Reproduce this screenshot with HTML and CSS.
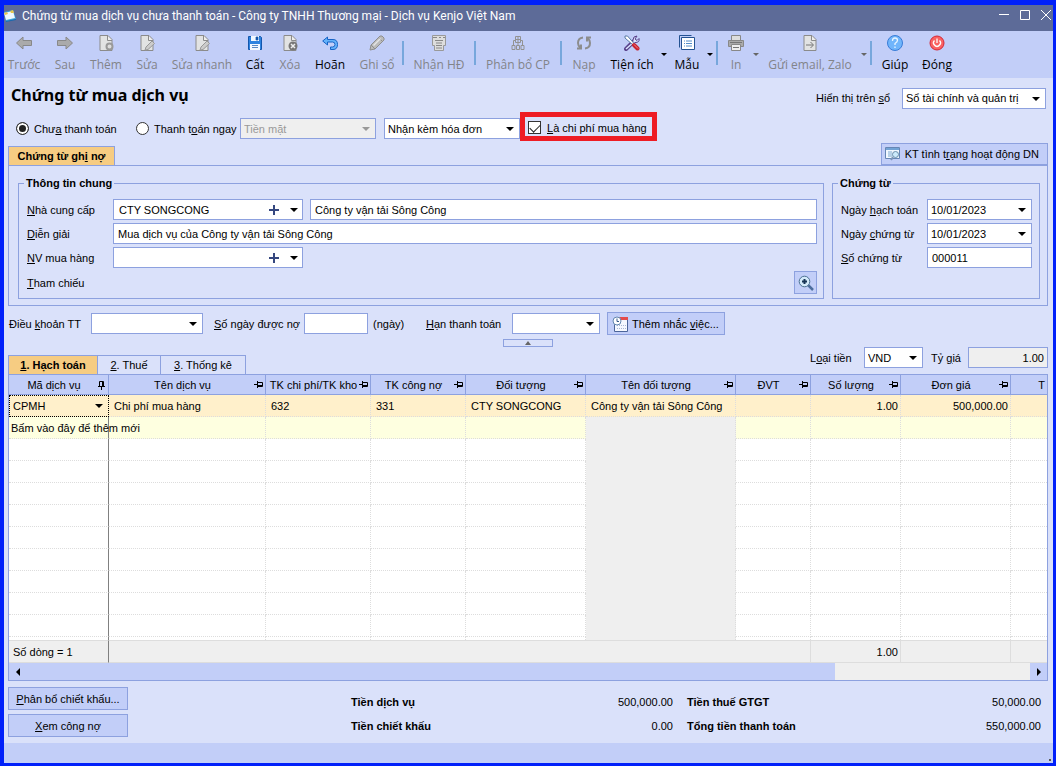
FILE: index.html
```
<!DOCTYPE html>
<html lang="vi">
<head>
<meta charset="utf-8">
<meta name="viewport" content="width=device-width, initial-scale=1">
<title>Chứng từ mua dịch vụ</title>
<link rel="stylesheet" href="styles.css">
</head>
<body>
<svg class="defs" aria-hidden="true">
  <symbol id="page" viewBox="0 0 16 16"><path d="M2 .5h8l4 4v11H2z" fill="#e2e3e3" stroke="#8b8b8b"/><path d="M9.500 1v4.500H14" fill="#eee" stroke="#8b8b8b"/></symbol>
  <symbol id="pin" viewBox="0 0 10 8"><path d="M0 3.500h3M3.500 0v7M3.500 1.500h5v4h-5M4 4.500h5" fill="none" stroke="#000"/></symbol>
  <symbol id="plus" viewBox="0 0 10 10"><path d="M5 0v10M0 5h10" stroke="#35477f" stroke-width="2"/></symbol>
</svg>
<div class="window">
  <header class="titlebar">
    <svg class="app-icon" viewBox="0 0 12 14"><path d="M0 3l9-2 3 9-10 3z" fill="#3ba3dc"/><path d="M0 4l9-2 2 7-9 2z" fill="#eef8ff"/><path d="M0 4l3-1 1 2-3 1zM6 2l3-1 1 3-3 0z" fill="#e8c64b"/><path d="M2 12l10-2v1L2 13z" fill="#1869af"/></svg>
    <span class="window-title">Chứng từ mua dịch vụ chưa thanh toán - Công ty TNHH Thương mại - Dịch vụ Kenjo Việt Nam</span>
    <div class="window-controls">
      <button aria-label="Thu nhỏ"><svg viewBox="0 0 12 12"><path d="M1 5.500h10" /></svg></button>
      <button aria-label="Phóng to"><svg viewBox="0 0 12 12"><path d="M1.500 1.500h9v9h-9z"/></svg></button>
      <button aria-label="Đóng cửa sổ"><svg viewBox="0 0 12 12"><path d="M1 1l10 10M11 1L1 11"/></svg></button>
    </div>
  </header>

  <nav class="toolbar">
    <button class="tool w40" disabled><svg viewBox="0 0 16 16"><path d="M.5 8L7 2v3.500h8.500v5H7V14z" fill="#aaa" stroke="#888"/></svg>Trước</button>
    <button class="tool w42" disabled><svg viewBox="0 0 16 16"><path d="M15.500 8L9 2v3.500H.5v5H9V14z" fill="#aaa" stroke="#888"/></svg>Sau</button>
    <button class="tool w40" disabled><svg viewBox="0 0 16 16"><use href="#page"/><circle cx="11.500" cy="11.500" r="3" fill="#ddd" stroke="#999" stroke-width="2"/></svg>Thêm</button>
    <button class="tool w42" disabled><svg viewBox="0 0 16 16"><use href="#page"/><path d="M6 15l1-3 6-6 2.500 2.500-6.500 6z" fill="#ccc" stroke="#999"/></svg>Sửa</button>
    <button class="tool w68" disabled><svg viewBox="0 0 16 16"><use href="#page"/><path d="M6 15l1-3 6-6 2.500 2.500-6.500 6z" fill="#ccc" stroke="#999"/></svg>Sửa nhanh</button>
    <button class="tool w38"><svg viewBox="0 0 16 16"><path d="M1.500 1.500h12l1 1v12h-13z" fill="#2d82df" stroke="#1457ad"/><path d="M4 1h8v5H4zM3 9h10v6H3z" fill="#f2f8ff"/><path d="M9 2h2v3H9zM5 10.500h6M5 12.500h6" fill="#1457ad" stroke="#1457ad" stroke-width=".7"/></svg>Cất</button>
    <button class="tool w32" disabled><svg viewBox="0 0 16 16"><use href="#page"/><circle cx="11" cy="11" r="4.500" fill="#777"/><path d="M9 9l4 4M13 9l-4 4" stroke="#eee" stroke-width="1.500"/></svg>Xóa</button>
    <button class="tool w48"><svg viewBox="0 0 16 16"><path d="M.7 6L5.500 2v2.500H11q4.500 0 4.500 5T11 14.500H8.500V12h2q2.500 0 2.500-2.500T10.500 7h-5v3z" fill="#65b3fb" stroke="#1763c5"/></svg>Hoãn</button>
    <button class="tool w46" disabled><svg viewBox="0 0 16 16"><path d="M1 15l1-5 9-9h2l2 2v2l-9 9zM2 10l4 4M10 3l4 4" fill="#bbb" stroke="#8e8e8e"/><path d="M4.500 10.500l7-7" stroke="#e5e5e5" stroke-width="1.500"/></svg>Ghi sổ</button>
    <span class="separator"></span>
    <button class="tool w66" disabled><svg viewBox="0 0 16 16"><path d="M1.500.5h13v10h-2v5h-9v-5h-2z" fill="#ddd" stroke="#999"/><path d="M2 2.500h4M8 2.500h2M12 2.500h2M4 5.500h8M5 8h6M5 10.500h6M5 13h6" stroke="#888"/></svg>Nhận HĐ</button>
    <span class="separator"></span>
    <button class="tool w80" disabled><svg viewBox="0 0 16 16"><path d="M5.500 1.500h5v6h-5zM6 4.500h4M8 2v5M8 7.500v3M3.500 11V5.500h2M10.500 5.500h2V11M2 10.500h3v4H2zM6.500 10.500h3v4h-3zM11 10.500h3v4h-3z" fill="none" stroke="#929292"/></svg>Phân bổ CP</button>
    <span class="separator"></span>
    <button class="tool w40" disabled><svg viewBox="0 0 16 16"><path d="M7 2.500Q2 3 2 8q0 3 2.500 5M1 13.500h4V9.500M9 13.500q5-.5 5-5.500 0-3-2.500-5M15 2.500h-4v4" fill="none" stroke="#8c8c8c" stroke-width="2"/></svg>Nạp</button>
    <button class="tool w56"><svg viewBox="0 0 16 16"><path d="M2 14l8-8" stroke="#59418b" stroke-width="4" stroke-linecap="round"/><path d="M9 5q0-4 4-4l-2 3 2 1.500 2-2q1 4-4 4" fill="#dce5ff" stroke="#59418b"/><path d="M2 14l9-8" stroke="#dce5ff" stroke-width="1.500"/><path d="M1 1h2.500l7 8-1.500 1-8-7z" fill="#fff" stroke="#597ba5"/><path d="M10 10l3.500 3.500" stroke="#c72331" stroke-width="4" stroke-linecap="round"/><path d="M10 9.500l4 4" stroke="#ff8585"/></svg>Tiện ích</button>
    <button class="drop w8" aria-label="Mở Tiện ích"><i class="arrow"></i></button>
    <button class="tool w38"><svg viewBox="0 0 16 16"><path d="M.5 12.500V.5h12" fill="none" stroke="#245292"/><path d="M2.500 2.500h13v12h-13z" fill="#fff" stroke="#245292"/><path d="M5 6h1M7 6h6M5 8.500h1M7 8.500h6M5 11h1M7 11h6" stroke="#528bca"/></svg>Mẫu</button>
    <button class="drop w8" aria-label="Mở Mẫu"><i class="arrow"></i></button>
    <span class="separator"></span>
    <button class="tool w32" disabled><svg viewBox="0 0 16 16"><path d="M3.500 5V.5h9V5" fill="#ddd" stroke="#888"/><path d="M.5 5.500h15v6H.5z" fill="#aaa" stroke="#888"/><path d="M3.500 9.500h9v6h-9z" fill="#eee" stroke="#888"/><path d="M2 7.500h12M5 12.500h6" stroke="#777"/></svg>In</button>
    <button class="drop w8" disabled aria-label="Mở In"><i class="arrow"></i></button>
    <button class="tool w100" disabled><svg viewBox="0 0 16 16"><use href="#page"/><path d="M4 10h7M8.500 7l3 3-3 3" fill="none" stroke="#777"/></svg>Gửi email, Zalo</button>
    <button class="drop w8" disabled aria-label="Mở Gửi email, Zalo"><i class="arrow"></i></button>
    <span class="separator"></span>
    <button class="tool w42"><svg viewBox="0 0 16 16"><circle cx="8" cy="8" r="7.500" fill="#70b5fb" stroke="#397cd7"/><path d="M5.500 6q0-3 2.500-3t2.500 2.300Q10.500 7 8 8.500v1.500M8 11.500V13" fill="none" stroke="#e8f5ff" stroke-width="1.300"/></svg>Giúp</button>
    <button class="tool w42"><svg viewBox="0 0 16 16"><circle cx="8" cy="8" r="7" fill="#fa6262" stroke="#d52939"/><path d="M5.500 5.500q-2 2-.5 4t3 2 3-2-.5-4M8 3.500V8" fill="none" stroke="#fff" stroke-width="1.300"/></svg>Đóng</button>
  </nav>

  <main class="content">
    <div class="heading-row">
      <h1>Chứng từ mua dịch vụ</h1>
      <label for="book">Hiển thị trên <u>s</u>ổ</label>
      <span class="select w144"><select id="book"><option>Sổ tài chính và quản trị</option></select></span>
    </div>

    <div class="payment-row">
      <label class="radio first"><input type="radio" name="pay" checked><span>Chư<u>a</u> thanh toán</span></label>
      <label class="radio second"><input type="radio" name="pay"><span>Thanh t<u>o</u>án ngay</span></label>
      <span class="select method off"><select disabled aria-label="Phương thức thanh toán"><option>Tiền mặt</option></select></span>
      <span class="select invoice"><select aria-label="Hóa đơn"><option>Nhận kèm hóa đơn</option></select></span>
      <label class="highlight"><input type="checkbox" checked><span><u>L</u>à chi phí mua hàng</span></label>
    </div>

    <div class="tab-row">
      <button class="tab active voucher">Chứng từ gh<u>i</u> nợ</button>
      <button class="button status-check"><svg width="16" height="14" viewBox="0 0 16 14"><path d="M.5.5h14v11H.5z" fill="#f2f8ff" stroke="#6686b5"/><path d="M1 2h13" stroke="#72a3d5" stroke-width="2"/><path d="M3 5h4M3 7h4M3 9h4" stroke="#7da9d0"/><circle cx="10.500" cy="7.500" r="3" fill="#cceafb" stroke="#6a8eaa"/><path d="M8 10l-2 3" stroke="#7b94b7" stroke-width="2"/></svg><span>KT tình t<u>r</u>ạng hoạt động DN</span></button>
    </div>
    <section class="panel">
      <fieldset class="general">
        <legend>Thông tin chung</legend>
        <div class="form-grid">
          <label for="vendor"><u>N</u>hà cung cấp</label>
          <div class="pair">
            <span class="combo"><input id="vendor" value="CTY SONGCONG"><button class="add" aria-label="Thêm nhà cung cấp"><svg width="10" height="10"><use href="#plus"/></svg></button><button class="open" aria-label="Chọn nhà cung cấp"><i class="arrow"></i></button></span>
            <input class="field grow" aria-label="Tên nhà cung cấp" value="Công ty vận tải Sông Công">
          </div>
          <label for="note"><u>D</u>iễn giải</label>
          <input id="note" class="field" value="Mua dịch vụ của Công ty vận tải Sông Công">
          <label for="buyer"><u>N</u>V mua hàng</label>
          <span class="combo"><input id="buyer"><button class="add" aria-label="Thêm nhân viên"><svg width="10" height="10"><use href="#plus"/></svg></button><button class="open" aria-label="Chọn nhân viên"><i class="arrow"></i></button></span>
          <span class="reference"><u>T</u>ham chiếu</span>
          <button class="button search" aria-label="Tìm tham chiếu"><svg width="16" height="16" viewBox="0 0 16 16"><path d="M10 10l5 5" stroke="#4c6d9d" stroke-width="2.500"/><circle cx="6.500" cy="6.500" r="5.300" fill="#d4eafa" stroke="#4b7191"/><path d="M6.500 4v5M4 6.500h5" stroke="#173454" stroke-width="2"/></svg></button>
        </div>
      </fieldset>
      <fieldset class="voucher-info">
        <legend>Chứng từ</legend>
        <div class="date-grid">
          <label for="d1">Ngày <u>h</u>ạch toán</label>
          <span class="select"><select id="d1"><option>10/01/2023</option></select></span>
          <label for="d2">Ngày <u>c</u>hứng từ</label>
          <span class="select"><select id="d2"><option>10/01/2023</option></select></span>
          <label for="no"><u>S</u>ố chứng từ</label>
          <input id="no" class="field" value="000011">
        </div>
      </fieldset>
    </section>

    <div class="terms">
      <label for="term" class="term-label">Điều <u>k</u>hoản TT</label>
      <span class="select w112"><select id="term"><option></option></select></span>
      <label for="days" class="days-label"><u>S</u>ố ngày được nợ</label>
      <input id="days" class="field w64"><span class="unit">(ngày)</span>
      <label for="due" class="due-label"><u>H</u>ạn thanh toán</label>
      <span class="select w88"><select id="due"><option></option></select></span>
      <button class="button reminder"><svg width="16" height="16" viewBox="0 0 16 16"><path d="M2.500 3.500h13v12h-13z" fill="#f5f8ff" stroke="#4c659a"/><path d="M7 2.500h9" stroke="#e34b4b" stroke-width="3"/><path d="M5 9.500h9M5 12.500h9" stroke="#aab7d5" stroke-dasharray="1 1"/><circle cx="5" cy="5" r="4" fill="#fff" stroke="#6488b1"/><path d="M5 2.500V5.500h2" fill="none" stroke="#34598a"/></svg><span>Thêm nhắc <u>v</u>iệc...</span></button>
    </div>
    <button class="collapse" aria-label="Thu gọn"><i></i></button>

    <div class="grid-tabs">
      <button class="tab active t90"><u>1</u>. Hạch toán</button>
      <button class="tab t64"><u>2</u>. Thuế</button>
      <button class="tab t86"><u>3</u>. Thống kê</button>
      <label for="currency" class="currency-label">L<u>o</u>ại tiền</label>
      <span class="select currency"><select id="currency"><option>VND</option></select></span>
      <label for="rate" class="rate-label">Tỷ <u>g</u>iá</label>
      <input id="rate" class="field rate" value="1.00" readonly>
    </div>

    <section class="grid">
      <div class="grid-body">
      <table>
        <colgroup><col class="c100"><col class="c157"><col class="c105"><col class="c95"><col class="c120"><col class="c150"><col class="c75"><col class="c90"><col class="c110"><col></colgroup>
        <thead><tr>
          <th><div><span>Mã dịch vụ</span><svg class="pin down"><use href="#pin"/></svg></div></th>
          <th><div><span>Tên dịch vụ</span><svg class="pin"><use href="#pin"/></svg></div></th>
          <th><div><span>TK chi phí/TK kho</span><svg class="pin"><use href="#pin"/></svg></div></th>
          <th><div><span>TK công nợ</span><svg class="pin"><use href="#pin"/></svg></div></th>
          <th><div><span>Đối tượng</span><svg class="pin"><use href="#pin"/></svg></div></th>
          <th><div><span>Tên đối tượng</span><svg class="pin"><use href="#pin"/></svg></div></th>
          <th><div><span>ĐVT</span><svg class="pin"><use href="#pin"/></svg></div></th>
          <th><div><span>Số lượng</span><svg class="pin"><use href="#pin"/></svg></div></th>
          <th><div><span>Đơn giá</span><svg class="pin"><use href="#pin"/></svg></div></th>
          <th class="cut">T</th>
        </tr></thead>
        <tbody>
          <tr class="selected"><td class="editing"><span class="select cell"><select aria-label="Mã dịch vụ"><option>CPMH</option></select></span></td><td>Chi phí mua hàng</td><td>632</td><td>331</td><td>CTY SONGCONG</td><td>Công ty vận tải Sông Công</td><td></td><td class="num">1.00</td><td class="num">500,000.00</td><td></td></tr>
          <tr class="new"><td>Bấm vào đây để thêm mới</td><td></td><td></td><td></td><td></td><td class="locked"></td><td></td><td></td><td></td><td></td></tr>
          <tr><td></td><td></td><td></td><td></td><td></td><td class="locked"></td><td></td><td></td><td></td><td></td></tr>
          <tr><td></td><td></td><td></td><td></td><td></td><td class="locked"></td><td></td><td></td><td></td><td></td></tr>
          <tr><td></td><td></td><td></td><td></td><td></td><td class="locked"></td><td></td><td></td><td></td><td></td></tr>
          <tr><td></td><td></td><td></td><td></td><td></td><td class="locked"></td><td></td><td></td><td></td><td></td></tr>
          <tr><td></td><td></td><td></td><td></td><td></td><td class="locked"></td><td></td><td></td><td></td><td></td></tr>
          <tr><td></td><td></td><td></td><td></td><td></td><td class="locked"></td><td></td><td></td><td></td><td></td></tr>
          <tr><td></td><td></td><td></td><td></td><td></td><td class="locked"></td><td></td><td></td><td></td><td></td></tr>
          <tr><td></td><td></td><td></td><td></td><td></td><td class="locked"></td><td></td><td></td><td></td><td></td></tr>
          <tr><td></td><td></td><td></td><td></td><td></td><td class="locked"></td><td></td><td></td><td></td><td></td></tr>
          <tr class="rest"><td></td><td></td><td></td><td></td><td></td><td class="locked"></td><td></td><td></td><td></td><td></td></tr>
        </tbody>
        <tfoot><tr><td>Số dòng = 1</td><td colspan="6"></td><td class="num">1.00</td><td></td><td></td></tr></tfoot>
      </table>
      </div>
      <div class="scrollbar">
        <button aria-label="Cuộn trái"><i class="left"></i></button><span class="thumb"></span><span class="track"></span><button aria-label="Cuộn phải"><i class="right"></i></button>
      </div>
    </section>

    <div class="bottom">
      <div class="actions">
        <button class="button"><span><u>P</u>hân bổ chiết khấu...</span></button>
        <button class="button"><span><u>X</u>em công nợ</span></button>
      </div>
      <dl class="totals sums">
        <dt>Tiền dịch vụ</dt><dd>500,000.00</dd>
        <dt>Tiền chiết khấu</dt><dd>0.00</dd>
      </dl>
      <dl class="totals">
        <dt>Tiền thuế GTGT</dt><dd>50,000.00</dd>
        <dt>Tổng tiền thanh toán</dt><dd>550,000.00</dd>
      </dl>
    </div>
  </main>
  <footer class="statusbar"><i></i></footer>
</div>
</body>
</html>
```
FILE: styles.css
```
:root {
  --line: #8da1df;
  --bar: #c2cef8;
  --page: #dae1fa;
  --orange: #f6cc82;
}
* { box-sizing: border-box; }
body {
  margin: 0;
  font: 11px/16px "Liberation Sans", Arial, sans-serif;
  color: #000;
}
button, input, select { font: inherit; color: inherit; margin: 0; }
button { padding: 0; border: 0; background: none; white-space: nowrap; }
label { white-space: nowrap; }
.defs { display: none; }
.window {
  min-height: 100vh;
  display: flex;
  flex-direction: column;
  border: solid #0020fa;
  border-width: 5px 3px 3px 4px;
  background: var(--page);
}

.titlebar {
  display: flex;
  align-items: center;
  height: 26px;
  background: #5d6b98;
  color: #fff;
  font: 12px/16px Roboto, sans-serif;
}
.app-icon { width: 12px; height: 14px; margin-bottom: 4px; }
.window-title { margin: 0 auto 4px 6px; white-space: nowrap; }
.window-controls { display: flex; gap: 9px; margin: 0 1px 6px 0; }
.window-controls button { width: 12px; height: 12px; }
.window-controls svg { display: block; width: 12px; height: 12px; fill: none; stroke: #fff; }

.toolbar { display: flex; height: 47px; background: var(--bar); }
.tool {
  display: flex;
  flex-direction: column;
  align-items: center;
  gap: 5px;
  padding-top: 4px;
  flex: none;
  font: 12px/18px "Open Sans", sans-serif;
}
.tool svg { width: 16px; height: 16px; flex: none; }
.tool:disabled { color: #828489; }
.separator { flex: none; width: 2px; height: 24px; margin: 10px 2px; background: #77a7dc; }
.drop { flex: none; padding-top: 0; }
.drop:disabled { color: #666; }
.arrow {
  display: block;
  width: 0;
  margin: auto;
  border: solid transparent;
  border-width: 4px 4px 0;
  border-top-color: currentColor;
}
.drop .arrow { border-width: 3px 3px 0; }
.w8 { width: 8px; }
.w32 { width: 32px; }
.w38 { width: 38px; }
.w40 { width: 40px; }
.w42 { width: 42px; }
.w46 { width: 46px; }
.w48 { width: 48px; }
.w56 { width: 56px; }
.w64 { width: 64px; }
.w66 { width: 66px; }
.w68 { width: 68px; }
.w80 { width: 80px; }
.w88 { width: 88px; }
.w100 { width: 100px; }
.w112 { width: 112px; }
.w144 { width: 144px; }

.content { flex: 1; padding: 0 5px 6px 4px; }
.field, .combo, .select {
  display: flex;
  height: 21px;
  border: 1px solid var(--line);
  background: #fff;
}
.field { min-width: 0; padding: 0 4px; border-radius: 0; outline: 0; }
.combo { width: 190px; align-items: center; }
.combo input { flex: 1; min-width: 0; border: 0; padding: 0 5px; background: none; }
.combo button { height: 19px; }
.combo .add { width: 22px; }
.combo .open { width: 17px; }
.combo button svg { display: block; margin: auto; }
.select { position: relative; flex: none; }
.select select {
  width: 100%;
  padding: 0 16px 0 3px;
  border: 0;
  border-radius: 0;
  background: none;
  appearance: none;
}
.select::after {
  content: "";
  position: absolute;
  right: 5px;
  top: 8px;
  border: solid transparent;
  border-width: 4px 4px 0;
  border-top-color: #000;
  pointer-events: none;
}
.off { background: #efefef; }
.off select { color: #999; opacity: 1; }
.off::after { border-top-color: #999; }
.button {
  display: flex;
  align-items: center;
  height: 23px;
  border: 1px solid var(--line);
  background: var(--bar);
}

.heading-row { display: flex; align-items: center; height: 34px; padding: 6px 2px 0 3px; }
h1 { margin: 0 auto 6px 0; font: bold 16px/24px "Noto Sans", sans-serif; }
.heading-row label { margin-right: 12px; }
.payment-row { display: flex; align-items: flex-end; height: 29px; }
.radio { display: flex; align-items: center; height: 21px; margin-bottom: 2px; }
.radio input {
  appearance: none;
  width: 13px;
  height: 13px;
  margin-right: 5px;
  border: 1px solid #333;
  border-radius: 50%;
  background: #fff;
}
.radio input:checked { background: #222; box-shadow: inset 0 0 0 2px #fff; }
.first { width: 120px; padding-left: 8px; }
.second { width: 104px; padding-left: 0; margin-left: 8px; }
.payment-row .select { margin-bottom: 2px; }
.method { width: 136px; }
.invoice { width: 136px; margin-left: 8px; }
.highlight {
  display: flex;
  align-items: center;
  height: 29px;
  width: 137px;
  padding: 2px 0 0 3px;
  border: 5px solid #ee1c24;
}
.highlight input {
  appearance: none;
  width: 13px;
  height: 13px;
  margin-right: 6px;
  border: 1px solid #333;
  background: #fff;
}
.highlight input::before {
  content: "";
  display: block;
  width: 9px;
  height: 5px;
  margin: 2px 1px;
  border: solid #222;
  border-width: 0 0 1px 1px;
  transform: rotate(-45deg);
}

.tab-row { display: flex; align-items: flex-end; justify-content: space-between; height: 24px; }
.tab {
  height: 19px;
  border: 1px solid var(--line);
  border-left: 0;
  border-bottom: 0;
}
.tab.active { border-left: 1px solid var(--line); background: var(--orange); font-weight: bold; }
.voucher { width: 107px; }
.status-check { gap: 4px; padding: 0 8px 0 3px; height: 22px; }
.panel { display: flex; gap: 8px; padding: 9px 7px 6px 9px; border: 1px solid var(--line); }
fieldset { margin: 0; min-width: 0; padding: 8px 6px 4px 8px; border: 1px solid var(--line); }
legend { margin-left: -3px; padding: 0 2px; font-weight: bold; }
.general { flex: 1; }
.voucher-info { width: 208px; padding-right: 7px; }
.form-grid { display: grid; grid-template-columns: 86px 1fr; row-gap: 3px; align-items: center; }
.pair { display: flex; gap: 7px; }
.grow { flex: 1; }
.search { justify-self: end; width: 23px; justify-content: center; }
.date-grid { display: grid; grid-template-columns: 86px 1fr; row-gap: 3px; align-items: center; }

.terms { display: flex; align-items: center; padding-top: 6px; }
.term-label { width: 83px; padding-left: 1px; flex: none; }
.days-label { width: 90px; margin-left: 11px; }
.unit { width: 58px; padding-left: 5px; }
.due-label { width: 86px; }
.reminder { width: 118px; margin-left: 7px; padding-left: 4px; gap: 4px; }
.collapse { display: block; width: 50px; height: 8px; margin: 4px auto 0; border: 1px solid var(--line); }
.collapse i { display: block; width: 0; margin: auto; border: solid transparent; border-width: 0 3px 4px; border-bottom-color: #666; }

.grid-tabs { display: flex; align-items: flex-end; height: 27px; }
.t90 { width: 90px; }
.t64 { width: 63px; }
.t86 { width: 85px; }
.grid-tabs .select, .grid-tabs .field { margin-bottom: 6px; }
.grid-tabs label { margin-bottom: 8px; }
.currency-label { width: 54px; margin-left: auto; }
.currency { width: 59px; }
.rate-label { width: 37px; margin-left: 8px; }
.rate { width: 80px; background: #efefef; text-align: right; padding-right: 3px; }

.grid { border: 1px solid var(--line); background: #fff; }
.grid-body { overflow: hidden; }
table { width: 100%; table-layout: fixed; border-spacing: 0; }
.c75 { width: 75px; }
.c90 { width: 90px; }
.c95 { width: 95px; }
.c100 { width: 100px; }
.c105 { width: 105px; }
.c110 { width: 110px; }
.c120 { width: 120px; }
.c150 { width: 150px; }
.c157 { width: 157px; }
th {
  height: 20px;
  padding: 0;
  border: solid var(--line);
  border-width: 0 1px 1px 0;
  background: var(--bar);
  font-weight: normal;
  white-space: nowrap;
}
th div { display: flex; align-items: center; padding: 0 1px 0 2px; overflow: hidden; }
th span { flex: 1; overflow: hidden; }
.pin { flex: none; width: 10px; height: 8px; }
.down { transform: rotate(-90deg); }
th.cut { text-align: right; border-right: 0; padding-right: 2px; }
td {
  height: 22px;
  padding: 0 5px;
  border: dotted #ddd;
  border-width: 0 1px 1px 0;
  white-space: nowrap;
}
td:first-child { border-right: 1px solid #808080; }
td:last-child { border-right: 0; }
.num { text-align: right; padding-right: 2px; }
.selected { background: #fff0cb; }
.new { background: #feffe0; }
.new td:first-child { padding: 0 2px; }
.locked { background: #efefef; border-bottom-color: #efefef; }
.selected .editing { padding: 0; border: 1px dotted #000; }
.cell { height: 20px; border: 0; background: none; }
.rest td { height: 3px; border-bottom: 0; }
tfoot td { height: 23px; padding-left: 4px; background: #efefef; border-style: solid; border-width: 1px 1px 1px 0; }
.scrollbar { display: flex; height: 17px; background: #efefef; }
.scrollbar button { width: 17px; background: var(--bar); }
.scrollbar i { display: block; width: 0; margin: auto; border: 4px solid transparent; }
.scrollbar .left { border-right-color: #000; border-left: 0; }
.scrollbar .right { border-left-color: #000; border-right: 0; }
.thumb { flex: 809; background: var(--bar); }
.track { flex: 195; }

.bottom { display: flex; padding-top: 6px; }
.actions { display: grid; gap: 4px; width: 120px; }
.actions .button { justify-content: center; }
.totals { display: grid; grid-template-columns: 1fr auto; row-gap: 8px; flex: 354; margin: 7px 7px 0 0; align-content: start; }
.sums { flex: 322; margin: 7px 14px 0 223px; }
dt { font-weight: bold; }
dd { margin: 0; text-align: right; }
.statusbar { display: flex; justify-content: flex-end; align-items: flex-end; height: 20px; padding: 2px; background: var(--bar); }
.statusbar i { width: 2px; height: 2px; background: #555; }
```
